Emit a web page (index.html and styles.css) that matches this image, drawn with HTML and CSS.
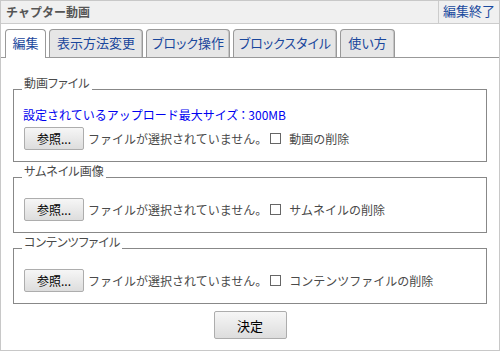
FILE: index.html
```html
<!DOCTYPE html>
<html lang="ja">
<head>
<meta charset="utf-8">
<title>チャプター動画</title>
<link rel="stylesheet" href="styles.css">
</head>
<body>
<div class="frame">
  <div class="titlebar">
    <span class="title">チャプター動画</span>
    <a class="close" href="#">編集終了</a>
  </div>
  <div class="tabs">
    <span class="tab active w1">編集</span>
    <span class="tab w2">表示方法変更</span>
    <span class="tab w3">ブロック操作</span>
    <span class="tab w4">ブロックスタイル</span>
    <span class="tab w5">使い方</span>
  </div>
  <div class="content">
    <fieldset class="group first">
      <legend>動画ファイル</legend>
      <p class="note">設定されているアップロード最大サイズ<span class="colon">：</span>300MB</p>
      <div class="row">
        <button class="browse" type="button">参照...</button>
        <span class="status">ファイルが選択されていません。</span>
        <input class="cb" type="checkbox" id="c1"><label for="c1">動画の削除</label>
      </div>
    </fieldset>
    <fieldset class="group">
      <legend>サムネイル画像</legend>
      <div class="row spaced">
        <button class="browse" type="button">参照...</button>
        <span class="status">ファイルが選択されていません。</span>
        <input class="cb" type="checkbox" id="c2"><label for="c2">サムネイルの削除</label>
      </div>
    </fieldset>
    <fieldset class="group">
      <legend>コンテンツファイル</legend>
      <div class="row spaced">
        <button class="browse" type="button">参照...</button>
        <span class="status">ファイルが選択されていません。</span>
        <input class="cb" type="checkbox" id="c3"><label for="c3">コンテンツファイルの削除</label>
      </div>
    </fieldset>
    <button class="submit" type="button">決定</button>
  </div>
</div>
</body>
</html>
```

FILE: styles.css
```css
* { box-sizing: border-box; }
html, body { margin: 0; padding: 0; background: #fff; }
body {
  font-family: "Noto Sans CJK JP", "Noto Sans", sans-serif;
  font-size: 12px;
  color: #4a4a4a;
}
.frame {
  width: 500px;
  height: 351px;
  border: 1px solid #c8c8c8;
  overflow: hidden;
}
.titlebar {
  height: 23px;
  background: #f0f0f0;
  border-bottom: 1px solid #cccccc;
  display: flex;
  justify-content: space-between;
  align-items: stretch;
}
.title {
  padding-left: 5px;
  font-weight: bold;
  font-size: 12px;
  line-height: 22px;
  color: #555;
}
.close {
  border-left: 1px solid #cccccc;
  padding: 0 4px;
  font-size: 13px;
  line-height: 20px;
  color: #1a4a9e;
  text-decoration: none;
}
.tabs {
  display: flex;
  align-items: flex-end;
  padding: 5px 0 0 4px;
  border-bottom: 1px solid #999;
  height: 34px;
}
.tab {
  height: 28px;
  margin-right: 3px;
  border: 1px solid #999;
  border-bottom: none;
  border-radius: 4px 4px 0 0;
  background: #e6e6e6;
  box-shadow: inset -1px 0 0 #c4c4c4;
  color: #1a479c;
  font-size: 13px;
  line-height: 26px;
  text-align: center;
  font-feature-settings: "palt";
  white-space: nowrap;
}
.tab.active {
  height: 29px;
  margin-bottom: -1px;
  background: #fff;
  box-shadow: none;
}
.w1 { width: 41px; }
.w2 { width: 94px; }
.w3 { width: 84px; }
.w4 { width: 104px; }
.w5 { width: 55px; margin-right: 0; }
.content {
  padding: 0 12px;
}
.group {
  margin: 2px 0 0;
  padding: 0 8px 11px;
  border: 1px solid #888;
  min-inline-size: 0;
}
.group.first { margin-top: 18px; }
.group legend {
  padding: 0 2px 12px;
  font-size: 12px;
  line-height: 14px;
  color: #4a4a4a;
  font-feature-settings: "palt";
}
.note {
  margin: 6px 0 5px 1px;
  line-height: 14px;
  color: #0000f0;
}
.colon { font-feature-settings: "palt"; margin: 0 2px; }
.row {
  display: flex;
  align-items: center;
  height: 23px;
  margin-left: 2px;
}
.row.spaced { margin-top: 8px; }
.browse {
  width: 60px;
  height: 23px;
  margin: 0 4px 0 0;
  padding: 0;
  border: 1px solid #adadad;
  border-radius: 2px;
  background: linear-gradient(#f6f6f6, #dddddd);
  font-family: "Noto Sans CJK JP", "Noto Sans", sans-serif;
  font-size: 12px;
  color: #000;
}
.status { color: #4a4a4a; }
.cb {
  appearance: none;
  -webkit-appearance: none;
  width: 11px;
  height: 11px;
  margin: 0 8px 0 3px;
  border: 1px solid #666;
  background: #fff;
}
label { color: #4a4a4a; }
.submit {
  display: block;
  width: 73px;
  height: 28px;
  margin: 7px auto 0;
  padding: 0;
  border: 1px solid #adadad;
  border-radius: 2px;
  background: linear-gradient(#f6f6f6, #dddddd);
  font-family: "Noto Sans CJK JP", "Noto Sans", sans-serif;
  font-size: 13px;
  color: #000;
}
```
